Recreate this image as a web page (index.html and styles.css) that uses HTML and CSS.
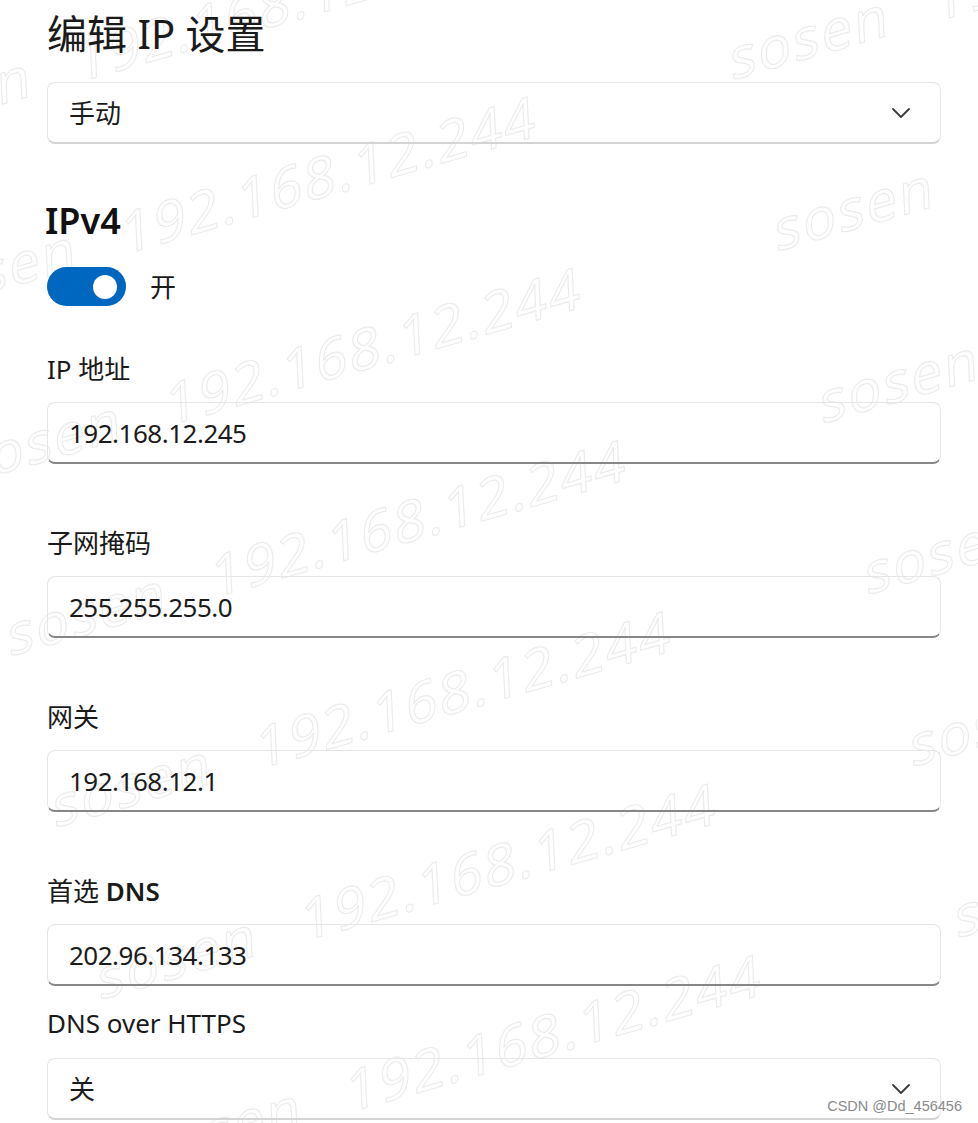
FILE: index.html
```html
<!DOCTYPE html>
<html lang="zh-CN">
<head>
    <meta charset="UTF-8">
    <meta name="viewport" content="width=device-width, initial-scale=1.0">
    <title>编辑 IP 设置</title>
    <link rel="stylesheet" href="styles.css">
</head>
<body>
    <div class="wm-clip">
        <div class="watermark">
            <div class="wm-rows">
                <div class="wm-row"><span class="wm-name">sosen</span><span class="wm-ip">192.168.12.244</span><span class="wm-name">sosen</span><span class="wm-ip">192.168.12.244</span></div>
                <div class="wm-row"><span class="wm-name">sosen</span><span class="wm-ip">192.168.12.244</span><span class="wm-name">sosen</span><span class="wm-ip">192.168.12.244</span></div>
                <div class="wm-row"><span class="wm-name">sosen</span><span class="wm-ip">192.168.12.244</span><span class="wm-name">sosen</span><span class="wm-ip">192.168.12.244</span></div>
                <div class="wm-row"><span class="wm-name">sosen</span><span class="wm-ip">192.168.12.244</span><span class="wm-name">sosen</span><span class="wm-ip">192.168.12.244</span></div>
                <div class="wm-row"><span class="wm-name">sosen</span><span class="wm-ip">192.168.12.244</span><span class="wm-name">sosen</span><span class="wm-ip">192.168.12.244</span></div>
                <div class="wm-row"><span class="wm-name">sosen</span><span class="wm-ip">192.168.12.244</span><span class="wm-name">sosen</span><span class="wm-ip">192.168.12.244</span></div>
                <div class="wm-row"><span class="wm-name">sosen</span><span class="wm-ip">192.168.12.244</span><span class="wm-name">sosen</span><span class="wm-ip">192.168.12.244</span></div>
                <div class="wm-row"><span class="wm-name">sosen</span><span class="wm-ip">192.168.12.244</span><span class="wm-name">sosen</span><span class="wm-ip">192.168.12.244</span></div>
            </div>
        </div>
    </div>

    <div class="dialog">
        <h1 class="title">编辑 IP 设置</h1>
        <div class="select">
            <span>手动</span>
            <svg class="chevron" width="18" height="10" viewBox="0 0 18 10"><polyline points="1,1 9,9 17,1"/></svg>
        </div>

        <h2 class="section">IPv4</h2>
        <div class="switch-row">
            <span class="switch"><span class="knob"></span></span>
            <span>开</span>
        </div>

        <div class="field field-first">
            <label for="ip">IP 地址</label>
            <input type="text" id="ip" class="textbox" value="192.168.12.245">
        </div>
        <div class="field">
            <label for="mask">子网掩码</label>
            <input type="text" id="mask" class="textbox" value="255.255.255.0">
        </div>
        <div class="field">
            <label for="gateway">网关</label>
            <input type="text" id="gateway" class="textbox" value="192.168.12.1">
        </div>
        <div class="field">
            <label for="dns">首选 <b>DNS</b></label>
            <input type="text" id="dns" class="textbox" value="202.96.134.133">
        </div>
        <div class="field field-tight">
            <label>DNS over HTTPS</label>
            <div class="select">
                <span>关</span>
                <svg class="chevron" width="18" height="10" viewBox="0 0 18 10"><polyline points="1,1 9,9 17,1"/></svg>
            </div>
        </div>
    </div>

    <div class="credit">CSDN @Dd_456456</div>
</body>
</html>
```

FILE: styles.css
```css
html, body {
    margin: 0;
    overflow: hidden;
}
body {
    position: relative;
    height: 1123px;
    background: #fff;
    color: #1a1a1a;
    font-family: "Noto Sans", "Noto Sans CJK SC", sans-serif;
    font-size: 26px;
    line-height: 36px;
}
.dialog {
    position: relative;
    z-index: 1;
    width: 894px;
    padding: 8px 0 0 47px;
}
.title {
    margin: 0;
    font-size: 40px;
    line-height: 52px;
    font-weight: 400;
}
.select,
.textbox {
    box-sizing: border-box;
    width: 894px;
    height: 62px;
    margin: 0;
    padding: 0 0 0 21px;
    background: transparent;
    border: 1.5px solid #e6e6e6;
    border-radius: 8px;
    font: inherit;
    color: #1b1b1b;
}
.select {
    display: flex;
    align-items: center;
    justify-content: space-between;
    padding-right: 30px;
    margin-top: 22px;
    border-bottom: 2px solid #d4d4d4;
}
.textbox {
    display: block;
    border-bottom: 2px solid #878787;
    letter-spacing: -0.5px;
    outline: none;
}
.chevron polyline {
    fill: none;
    stroke: #3a3a3a;
    stroke-width: 1.8;
    stroke-linecap: round;
    stroke-linejoin: round;
}
.section {
    margin: 52px 0 0 -2px;
    font-size: 36px;
    line-height: 50px;
    font-weight: 600;
    color: #111;
}
.switch-row {
    display: flex;
    align-items: center;
    gap: 24px;
    margin-top: 21px;
    height: 39px;
}
.switch {
    display: flex;
    align-items: center;
    justify-content: flex-end;
    box-sizing: border-box;
    width: 79px;
    height: 39px;
    padding-right: 9px;
    background: #0067c0;
    border-radius: 20px;
}
.knob {
    width: 24px;
    height: 24px;
    background: #fff;
    border-radius: 50%;
}
.field {
    margin-top: 61px;
}
.field-first {
    margin-top: 45px;
}
.field label {
    display: block;
    margin-bottom: 15px;
}
.field label b {
    font-weight: 600;
}
.field-tight {
    margin-top: 19px;
}
.field-tight label {
    margin-bottom: 17px;
}
.field-tight .select {
    margin-top: 0;
}
.wm-clip {
    position: absolute;
    inset: 0;
    overflow: hidden;
    pointer-events: none;
}
.watermark {
    position: absolute;
    left: 140px;
    top: 252px;
    transform-origin: 0 0;
    transform: rotate(-16deg) skewX(-1.3deg);
    white-space: nowrap;
    font-family: "Noto Sans", sans-serif;
    font-size: 56px;
    line-height: 177.5px;
    letter-spacing: 2.5px;
    color: transparent;
    -webkit-text-stroke: 1.1px #ebebeb;
}
.wm-rows {
    margin-top: -290px;
    margin-left: -225px;
}
.wm-name,
.wm-ip {
    display: inline-block;
    transform: skewX(-12deg);
}
.wm-name {
    margin-right: 46px;
}
.wm-ip {
    margin-right: 200px;
}
.credit {
    position: absolute;
    z-index: 2;
    right: 16px;
    top: 1097px;
    font-family: "Liberation Sans", Arial, sans-serif;
    font-size: 14.5px;
    line-height: 18px;
    color: #8a8a8a;
}
```
